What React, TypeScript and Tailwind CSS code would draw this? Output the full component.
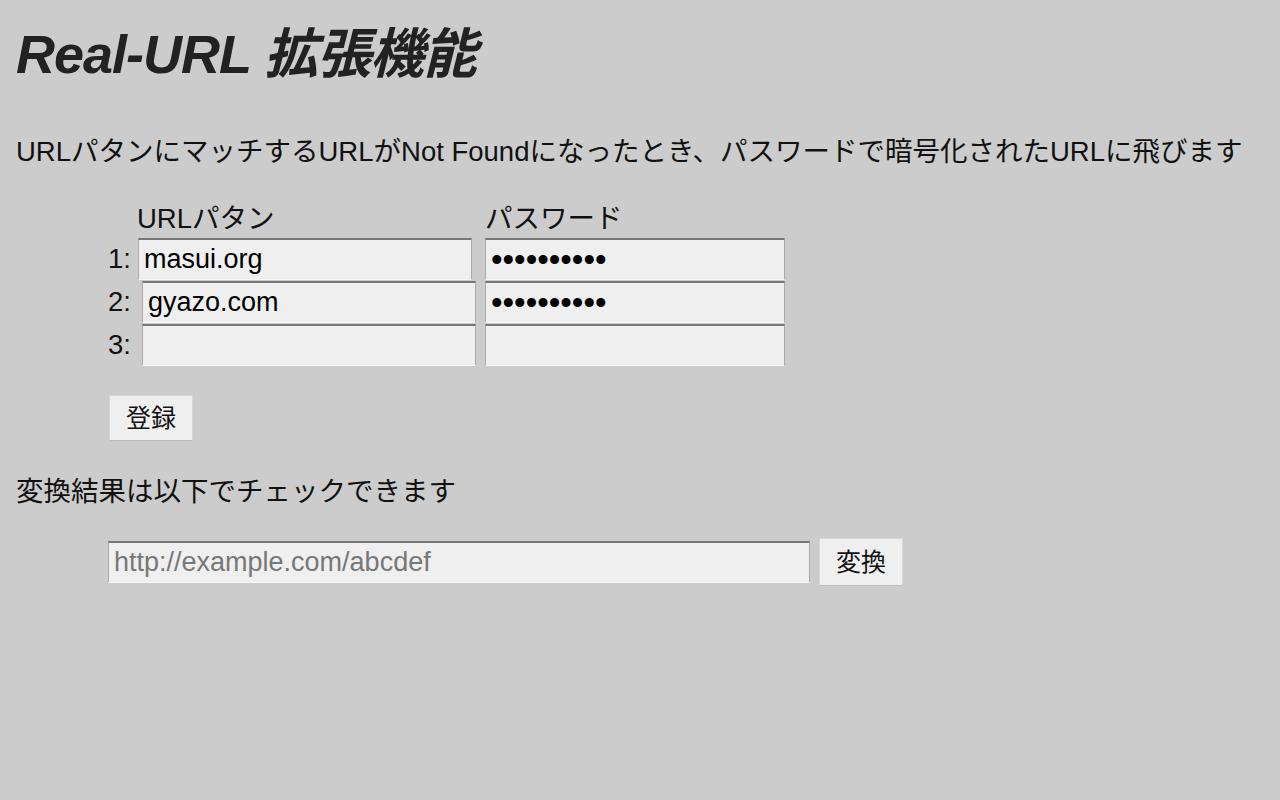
import { useState } from "react";

const inputClass =
  "h-[42px] border-t-2 border-x-[1.5px] border-b-[1.5px] border-t-[#777] border-x-[#ababab] border-b-[#f7f7f7] bg-[#efefef] px-[5px] text-black outline-none";

type Row = { id: number; labelWidth: string; pattern: string; password: string };

const initialRows: Row[] = [
  { id: 1, labelWidth: "w-[30px]", pattern: "masui.org", password: "abcdefghij" },
  { id: 2, labelWidth: "w-[34px]", pattern: "gyazo.com", password: "klmnopqrst" },
  { id: 3, labelWidth: "w-[34px]", pattern: "", password: "" },
];

export default function App() {
  const [rows, setRows] = useState(initialRows);
  const [url, setUrl] = useState("");

  function update(id: number, key: "pattern" | "password", value: string) {
    setRows((prev) => prev.map((r) => (r.id === id ? { ...r, [key]: value } : r)));
  }

  return (
    <div className="min-h-screen bg-[#cccccc] px-4 pt-[22px] font-['Liberation_Sans','Noto_Sans_CJK_JP',sans-serif] text-[27.5px] leading-[32px] text-[#111]">
      <h1 className="text-[54px] font-bold italic leading-[64px] tracking-[-1px] text-[#222]">
        Real-URL 拡張機能
      </h1>

      <p className="mt-[50px]">
        URLパタンにマッチするURLがNot Foundになったとき、パスワードで暗号化されたURLに飛びます
      </p>

      <div className="ml-[92px] mt-[35px]">
        <div className="flex">
          <span className="ml-[29px] w-[348px]">URLパタン</span>
          <span>パスワード</span>
        </div>

        <div className="mt-[3px] flex flex-col gap-px">
          {rows.map((row) => (
            <div key={row.id} className="flex items-center">
              <div className="flex w-[377px] items-center">
                <span className={row.labelWidth}>{row.id}:</span>
                <input
                  type="text"
                  value={row.pattern}
                  onChange={(e) => update(row.id, "pattern", e.target.value)}
                  className={`${inputClass} w-[334px] text-[27px]`}
                />
              </div>
              <input
                type="password"
                value={row.password}
                onChange={(e) => update(row.id, "password", e.target.value)}
                className={`${inputClass} w-[300px] text-[33px]`}
              />
            </div>
          ))}
        </div>

        <button className="mt-[29px] ml-px h-[46px] w-[84px] border border-[#d6d6d6] border-b-[#bdbdbd] bg-[#efefef] text-[25px]">
          登録
        </button>
      </div>

      <p className="mt-[35px]">変換結果は以下でチェックできます</p>

      <div className="ml-[92px] mt-[30px] flex items-center gap-[9px]">
        <input
          type="text"
          value={url}
          onChange={(e) => setUrl(e.target.value)}
          placeholder="http://example.com/abcdef"
          className={`${inputClass} w-[702px] text-[27px] placeholder:text-[#777]`}
        />
        <button className="h-[48px] w-[84px] border border-[#d6d6d6] border-b-[#bdbdbd] bg-[#efefef] text-[25px]">
          変換
        </button>
      </div>
    </div>
  );
}
